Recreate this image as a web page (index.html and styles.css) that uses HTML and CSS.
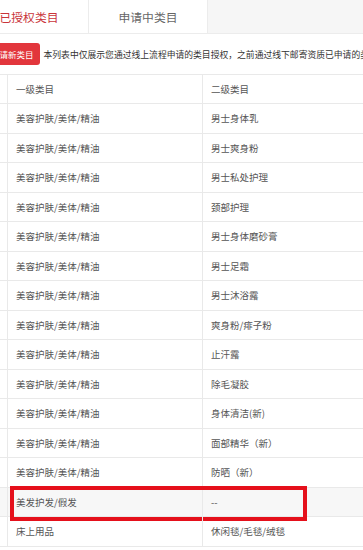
FILE: index.html
```html
<!DOCTYPE html>
<html lang="zh-CN">
<head>
<meta charset="utf-8">
<title>类目管理</title>
<link rel="stylesheet" href="styles.css">
</head>
<body>
<div class="page">
  <div class="tabs">
    <div class="tab active">已授权类目</div>
    <div class="tab">申请中类目</div>
    <div class="tabs-rest"></div>
  </div>
  <div class="toolbar">
    <button class="btn">申请新类目</button>
    <span class="note">本列表中仅展示您通过线上流程申请的类目授权，之前通过线下邮寄资质已申请的类目请联系运营查看</span>
  </div>
  <div class="table">
    <div class="row head"><div class="c0"></div><div class="c1">一级类目</div><div class="c2">二级类目</div><div class="c3"></div></div>
    <div class="row"><div class="c0"></div><div class="c1">美容护肤/美体/精油</div><div class="c2">男士身体乳</div><div class="c3"></div></div>
    <div class="row"><div class="c0"></div><div class="c1">美容护肤/美体/精油</div><div class="c2">男士爽身粉</div><div class="c3"></div></div>
    <div class="row"><div class="c0"></div><div class="c1">美容护肤/美体/精油</div><div class="c2">男士私处护理</div><div class="c3"></div></div>
    <div class="row"><div class="c0"></div><div class="c1">美容护肤/美体/精油</div><div class="c2">颈部护理</div><div class="c3"></div></div>
    <div class="row"><div class="c0"></div><div class="c1">美容护肤/美体/精油</div><div class="c2">男士身体磨砂膏</div><div class="c3"></div></div>
    <div class="row"><div class="c0"></div><div class="c1">美容护肤/美体/精油</div><div class="c2">男士足霜</div><div class="c3"></div></div>
    <div class="row"><div class="c0"></div><div class="c1">美容护肤/美体/精油</div><div class="c2">男士沐浴露</div><div class="c3"></div></div>
    <div class="row"><div class="c0"></div><div class="c1">美容护肤/美体/精油</div><div class="c2">爽身粉/痱子粉</div><div class="c3"></div></div>
    <div class="row"><div class="c0"></div><div class="c1">美容护肤/美体/精油</div><div class="c2">止汗露</div><div class="c3"></div></div>
    <div class="row"><div class="c0"></div><div class="c1">美容护肤/美体/精油</div><div class="c2">除毛凝胶</div><div class="c3"></div></div>
    <div class="row"><div class="c0"></div><div class="c1">美容护肤/美体/精油</div><div class="c2">身体清洁(新)</div><div class="c3"></div></div>
    <div class="row"><div class="c0"></div><div class="c1">美容护肤/美体/精油</div><div class="c2">面部精华（新）</div><div class="c3"></div></div>
    <div class="row"><div class="c0"></div><div class="c1">美容护肤/美体/精油</div><div class="c2">防晒（新）</div><div class="c3"></div></div>
    <div class="row hover"><div class="c0"></div><div class="c1">美发护发/假发</div><div class="c2">--</div><div class="c3"></div><span class="mark"></span></div>
    <div class="row"><div class="c0"></div><div class="c1">床上用品</div><div class="c2">休闲毯/毛毯/绒毯</div><div class="c3"></div></div>
  </div>
</div>
</body>
</html>
```

FILE: styles.css
```css
html, body {
  margin: 0;
  padding: 0;
  background: #fff;
  overflow: hidden;
}
body {
  font-family: "Noto Sans CJK SC", "Noto Sans", sans-serif;
  color: #333;
}
.page {
  margin-left: -30px;
  width: 760px;
}
.tabs {
  display: flex;
  height: 34px;
}
.tab {
  width: 119px;
  box-sizing: border-box;
  border-right: 1px solid #ececec;
  border-bottom: 1px solid #ececec;
  display: flex;
  align-items: center;
  justify-content: center;
  font-size: 11.8px;
  color: #666;
  background: #fff;
}
.tab.active {
  color: #c9343a;
}
.tabs-rest {
  flex: 1;
  background: #f6f6f6;
  border-bottom: 1px solid #ececec;
}
.toolbar {
  display: flex;
  align-items: center;
  padding-top: 9px;
  height: 22px;
  white-space: nowrap;
}
.btn {
  margin-left: 15px;
  height: 22px;
  padding: 0 6px;
  border: none;
  border-radius: 3px;
  background: #e2363c;
  color: #fff;
  font-family: inherit;
  font-size: 8.5px;
  line-height: 22px;
}
.note {
  margin-left: 4px;
  font-size: 8.8px;
  color: #333;
}
.table {
  margin-top: 9px;
  border-top: 1px solid #e9e9e9;
}
.row {
  position: relative;
  display: flex;
  height: 29.5px;
  box-sizing: border-box;
  border-bottom: 1px solid #e9e9e9;
  font-size: 9.5px;
  color: #555;
}
.row.head {
  height: 29px;
}
.row.hover {
  background: #f7f7f7;
}
.row > div {
  display: flex;
  align-items: center;
  box-sizing: border-box;
  border-right: 1px solid #e9e9e9;
}
.c0 { width: 38px; }
.c1 { width: 195px; padding-left: 8px; }
.c2 { width: 300px; padding-left: 8px; }
.c3 { flex: 1; }
.mark {
  position: absolute;
  left: 40px;
  top: -2px;
  width: 297px;
  height: 35px;
  box-sizing: border-box;
  border: 4px solid #e5101b;
}
```
